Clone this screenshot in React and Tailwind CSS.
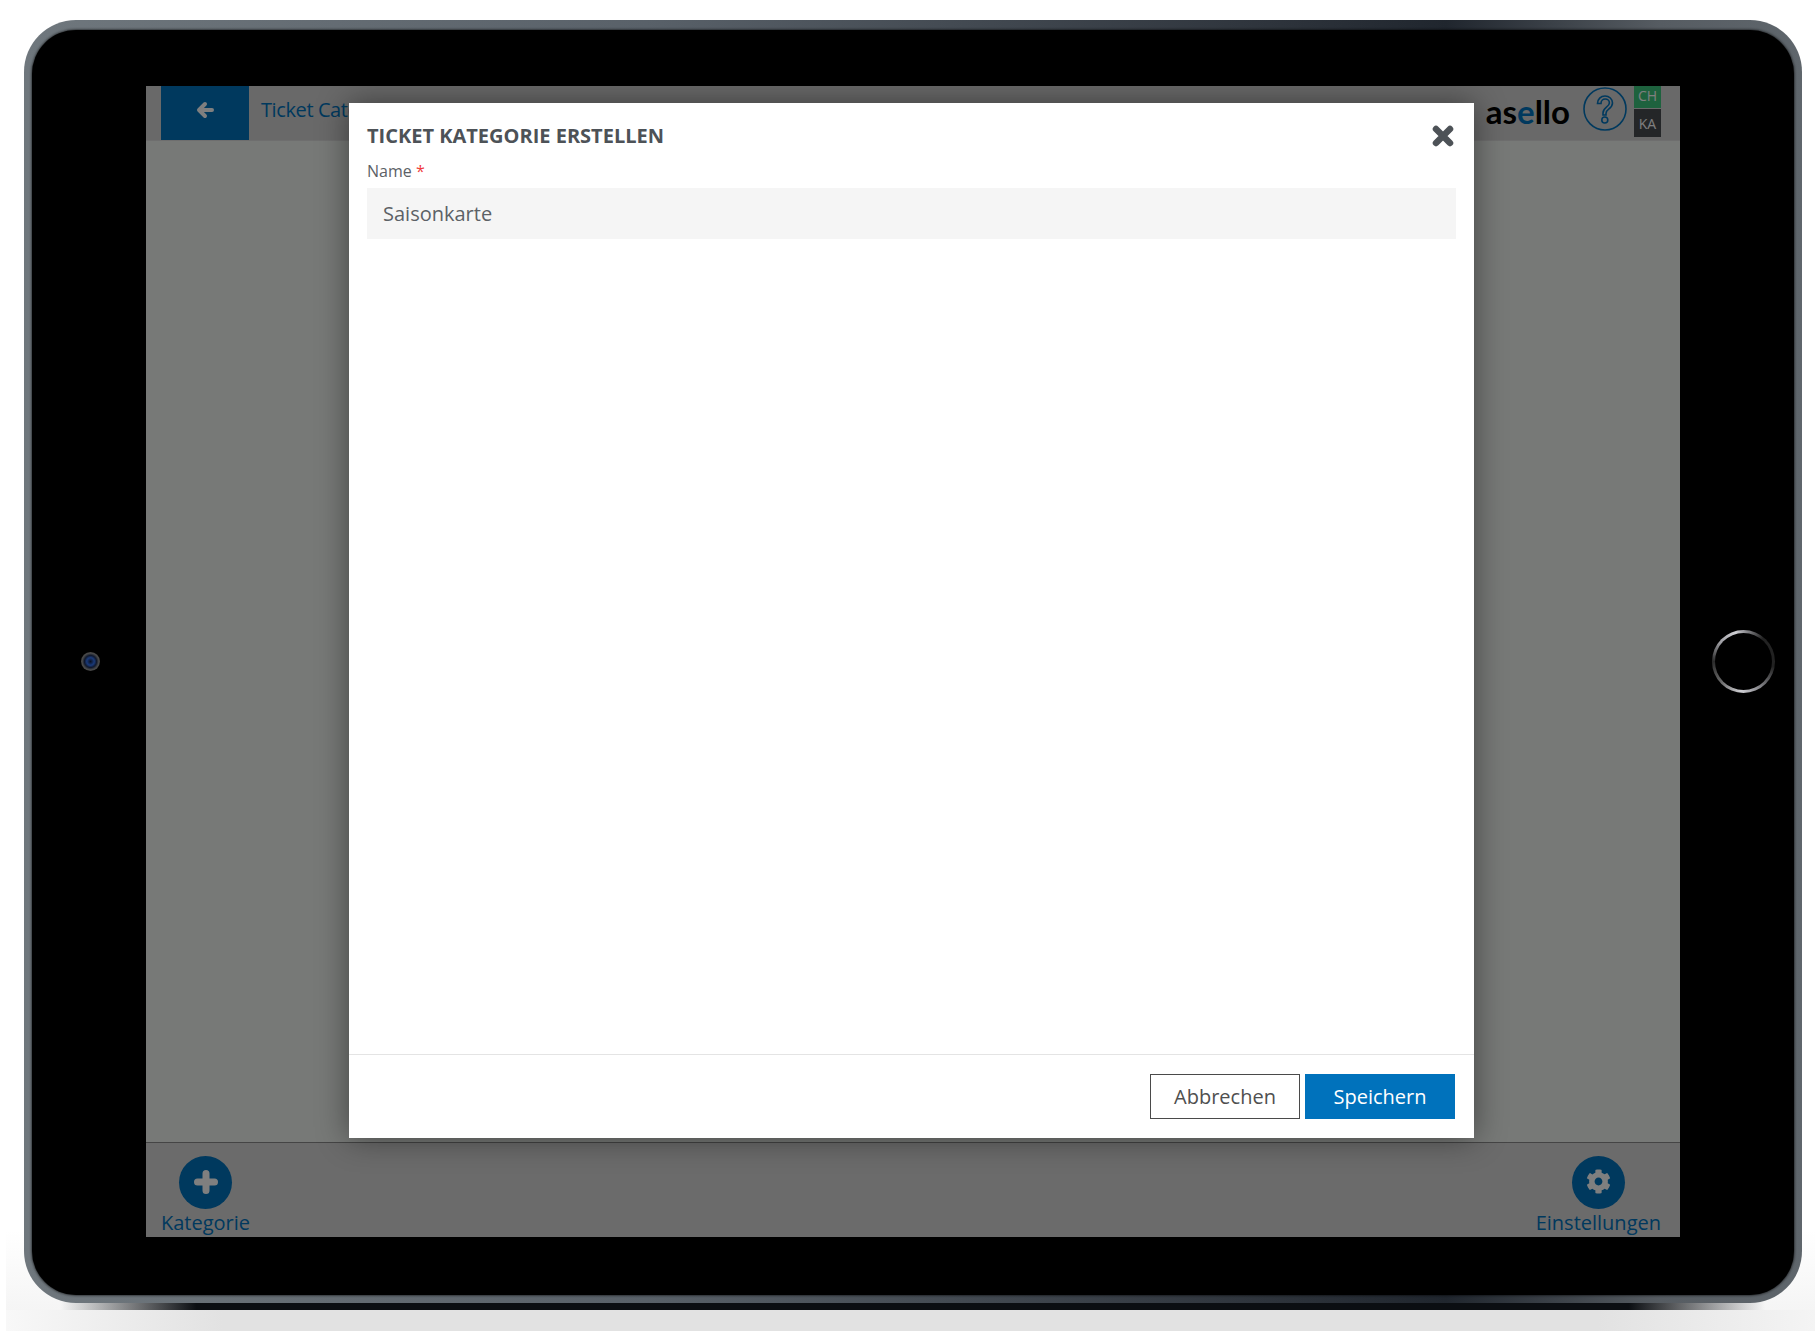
import React from 'react';
import { FaCog } from 'react-icons/fa';

const BottomAction = ({ icon, label }) => (
  <div className="flex flex-col items-center">
    <div className="flex h-[53px] w-[53px] items-center justify-center rounded-full bg-[#0072bc] pb-[2px] text-[25px] text-white">
      {icon}
    </div>
    <span className="text-[20px] leading-[27px] text-[#0072bc]">{label}</span>
  </div>
);

const ArrowIcon = () => (
  <svg width="18" height="18" viewBox="0 0 18 18" fill="none" stroke="currentColor" strokeWidth="4" strokeLinecap="round" strokeLinejoin="round">
    <path d="M9 3 3 9l6 6M3.5 9H16" />
  </svg>
);

const PlusIcon = () => (
  <svg width="24" height="24" viewBox="0 0 24 24" fill="none" stroke="currentColor" strokeWidth="7" strokeLinecap="round">
    <path d="M12 3.5v17M3.5 12h17" />
  </svg>
);

const CloseIcon = () => (
  <svg width="22" height="22" viewBox="0 0 22 22" fill="none" stroke="currentColor" strokeWidth="6.5" strokeLinecap="round">
    <path d="M4 4l14 14M18 4 4 18" />
  </svg>
);

const HelpIcon = () => (
  <svg width="44" height="44" viewBox="0 0 44 44" fill="none" stroke="#0072bc" strokeWidth="1.6">
    <circle cx="22" cy="22" r="21" />
    <path d="M14.5 16.5c0-4.5 3.3-7.5 7.5-7.5s7.5 3 7.5 7c0 3-1.7 4.6-3.8 6.2-1.6 1.2-2.7 2.3-2.7 4.3v1.5h-3v-2c0-2.7 1.4-4.2 3.2-5.6 1.8-1.4 3.2-2.5 3.2-4.4 0-2.4-1.9-4-4.2-4s-4.2 1.8-4.2 4.5z" />
    <circle cx="21.8" cy="33" r="3" />
  </svg>
);

const App = () => {
  return (
    <div className="relative h-[1331px] w-[1815px] overflow-hidden bg-white pl-[24px] pt-[20px] font-['Open_Sans',sans-serif]">
      {/* floor reflection under the device */}
      <div className="absolute bottom-[21px] left-[6px] right-0 h-[80px] bg-[linear-gradient(to_bottom,#ffffff,#f5f5f5)]" />
      <div className="absolute bottom-0 left-[6px] right-0 h-[21px] bg-[linear-gradient(to_right,#f8f8f8,#e2e2e2_12%,#e2e2e2_88%,#f4f4f4)]" />
      <div className="absolute left-[60px] right-[50px] top-[1300px] h-[10px] bg-[linear-gradient(to_right,transparent,#0b0e12_8%,#0b0e12_92%,transparent)]" />

      <div className="relative h-[1283px] w-[1778px] rounded-[52px] bg-[linear-gradient(to_right,#6f777d,#596169_35%,#2e343c_70%,#20262e_80%,#565c62_92%,#5f666c)] px-[8px] pb-[8px] pt-[10px]">
        <div className="flex h-full w-full rounded-[44px] bg-black pl-[114px] pt-[56px] shadow-[0_0_3px_#000000]">
          <div className="relative flex h-[1151px] w-[1534px] flex-col overflow-hidden bg-[#eff2ef]">
            <div className="flex h-[55px] items-start border-b border-[#dcdcdc] bg-[#d2d2d2] pl-[15px] pr-[19px]">
              <div className="flex h-[54px] w-[88px] items-center justify-center bg-[#0072bc] pb-[7px] text-white">
                <ArrowIcon />
              </div>
              <span className="ml-[12px] mt-[10px] text-[20px] leading-[28px] tracking-[-0.4px] text-[#0072bc]">Ticket Categories</span>
              <div className="ml-auto mt-[3px] font-['Lato',sans-serif] text-[33px] font-bold leading-[44px] text-black">
                as<span className="text-[#0072bc]">e</span>llo
              </div>
              <div className="ml-[13px] mt-[1px]">
                <HelpIcon />
              </div>
              <div className="ml-[7px] flex w-[27px] flex-col gap-[1px] text-center text-[14px] text-white">
                <div className="h-[22px] bg-[#3cc47c] leading-[20px]">CH</div>
                <div className="h-[28px] bg-[#494c50] leading-[30px]">KA</div>
              </div>
            </div>

            <div className="flex-1" />

            <div className="flex h-[95px] items-start justify-between border-t border-[#8a8a8a] bg-[#d6d6d6] pl-[15px] pr-[19px] pt-[13px]">
              <BottomAction icon={<PlusIcon />} label="Kategorie" />
              <BottomAction icon={<FaCog />} label="Einstellungen" />
            </div>

            {/* modal backdrop */}
            <div className="absolute inset-0 bg-black/50 pl-[203px] pt-[17px]">
              <div className="flex h-[1035px] w-[1125px] flex-col bg-white shadow-[0_0_30px_rgba(0,0,0,0.45)]">
                <div className="flex items-center justify-between pl-[18px] pr-[20px] pt-[20px]">
                  <h2 className="text-[20px] font-bold leading-[26px] text-[#4d5257]">TICKET KATEGORIE ERSTELLEN</h2>
                  <span className="text-[#4d5257]">
                    <CloseIcon />
                  </span>
                </div>
                <div className="flex-1 px-[18px] pt-[12px]">
                  <label className="block text-[16px] leading-[20px] text-[#5c6166]">
                    Name <span className="text-[#f03c3c]">*</span>
                  </label>
                  <div className="mt-[7px] flex h-[51px] items-center bg-[#f5f5f5] px-[16px] pt-[1px] text-[20px] text-[#5c6166]">
                    Saisonkarte
                  </div>
                </div>
                <div className="flex h-[84px] justify-end gap-[5px] border-t border-[#e4e4e4] pr-[19px] pt-[19px]">
                  <button className="h-[45px] w-[150px] border border-[#4a4a4a] bg-white text-[20px] text-[#4f4f4f]">Abbrechen</button>
                  <button className="h-[45px] w-[150px] bg-[#0072bc] text-[20px] text-white">Speichern</button>
                </div>
              </div>
            </div>
          </div>

          {/* camera and home button sit on the bezel */}
          <div className="absolute left-[57px] top-[632px] h-[19px] w-[19px] rounded-full bg-[radial-gradient(circle,#0a1020_0%,#1a3a7a_28%,#10182c_45%,#4a4a4a_62%,#262626_100%)]" />
          <div className="absolute left-[1688px] top-[610px] h-[63px] w-[63px] rounded-full bg-[conic-gradient(#9a9a9f_0deg,#222222_40deg,#222222_100deg,#8a8a8f_150deg,#cfcfd4_185deg,#666666_230deg,#2a2a2a_270deg,#a0a0a5_310deg,#cfcfd4_345deg,#9a9a9f_360deg)] p-[3px]">
            <div className="h-full w-full rounded-full bg-black" />
          </div>
        </div>
      </div>
    </div>
  );
};

export default App;
